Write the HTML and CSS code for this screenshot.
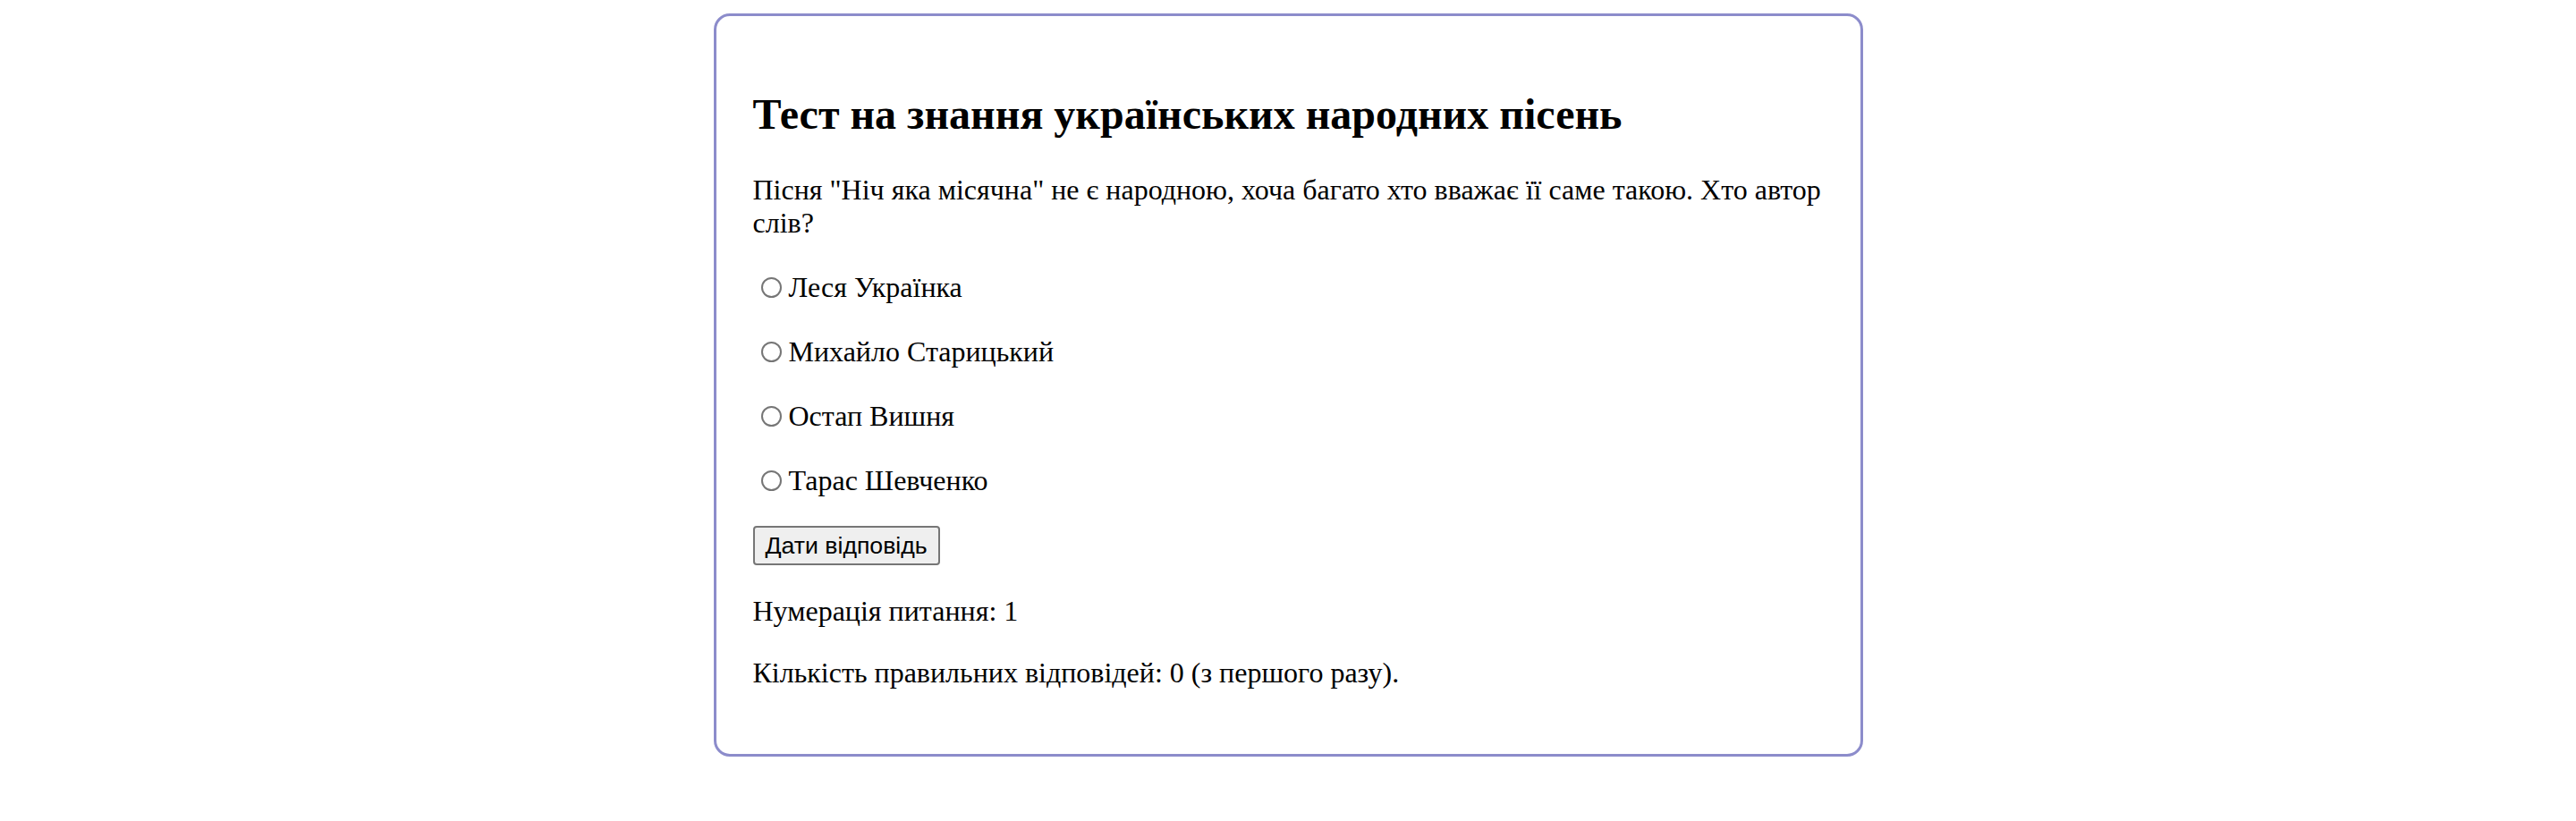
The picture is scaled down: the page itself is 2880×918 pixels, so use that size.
FILE: index.html
```html
<!DOCTYPE html>
<html lang="uk">
<head>
<meta charset="utf-8">
<title>Тест на знання українських народних пісень</title>
<link rel="stylesheet" href="styles.css">
</head>
<body>
<div class="card">
  <h1 class="title">Тест на знання українських народних пісень</h1>
  <p class="question">Пісня "Ніч яка місячна" не є народною, хоча багато хто вважає її саме такою. Хто автор слів?</p>
  <div class="options">
    <label class="option"><input type="radio" name="a" class="radio">Леся Українка</label>
    <label class="option"><input type="radio" name="a" class="radio">Михайло Старицький</label>
    <label class="option"><input type="radio" name="a" class="radio">Остап Вишня</label>
    <label class="option"><input type="radio" name="a" class="radio">Тарас Шевченко</label>
  </div>
  <button class="submit" type="button">Дати відповідь</button>
  <p class="info info-first">Нумерація питання: 1</p>
  <p class="info">Кількість правильних відповідей: 0 (з першого разу).</p>
</div>
</body>
</html>
```
FILE: styles.css
```css
html, body {
  margin: 0;
  padding: 0;
  background: #ffffff;
}

body {
  font-family: "Liberation Serif", "Times New Roman", serif;
  font-size: 32px;
  line-height: 37px;
  color: #000000;
}

.card {
  box-sizing: border-box;
  width: 1285px;
  margin: 15px auto 0;
  border: 3px solid #8c8ccb;
  border-radius: 18px;
  padding: 0 40px 72px 41px;
}

.title {
  margin: 82px 0 0;
  font-size: 48px;
  line-height: 55px;
  font-weight: bold;
}

.question {
  margin: 39px 0 0;
}

.options {
  display: flex;
  flex-direction: column;
}

.option {
  display: flex;
  align-items: center;
  margin-top: 35px;
  height: 37px;
}

.radio {
  appearance: none;
  -webkit-appearance: none;
  box-sizing: border-box;
  width: 23px;
  height: 23px;
  margin: 0 8px 0 9px;
  border: 2px solid #767676;
  border-radius: 50%;
  background: #ffffff;
}

.submit {
  display: block;
  box-sizing: border-box;
  margin-top: 32px;
  height: 44px;
  padding: 0 12px;
  font-family: "Liberation Sans", Arial, sans-serif;
  font-size: 26.67px;
  color: #000000;
  background: #efefef;
  border: 2px solid #767676;
  border-radius: 4px;
}

.info {
  margin: 32px 0 0;
}

.info-first {
  margin-top: 33px;
}
```
